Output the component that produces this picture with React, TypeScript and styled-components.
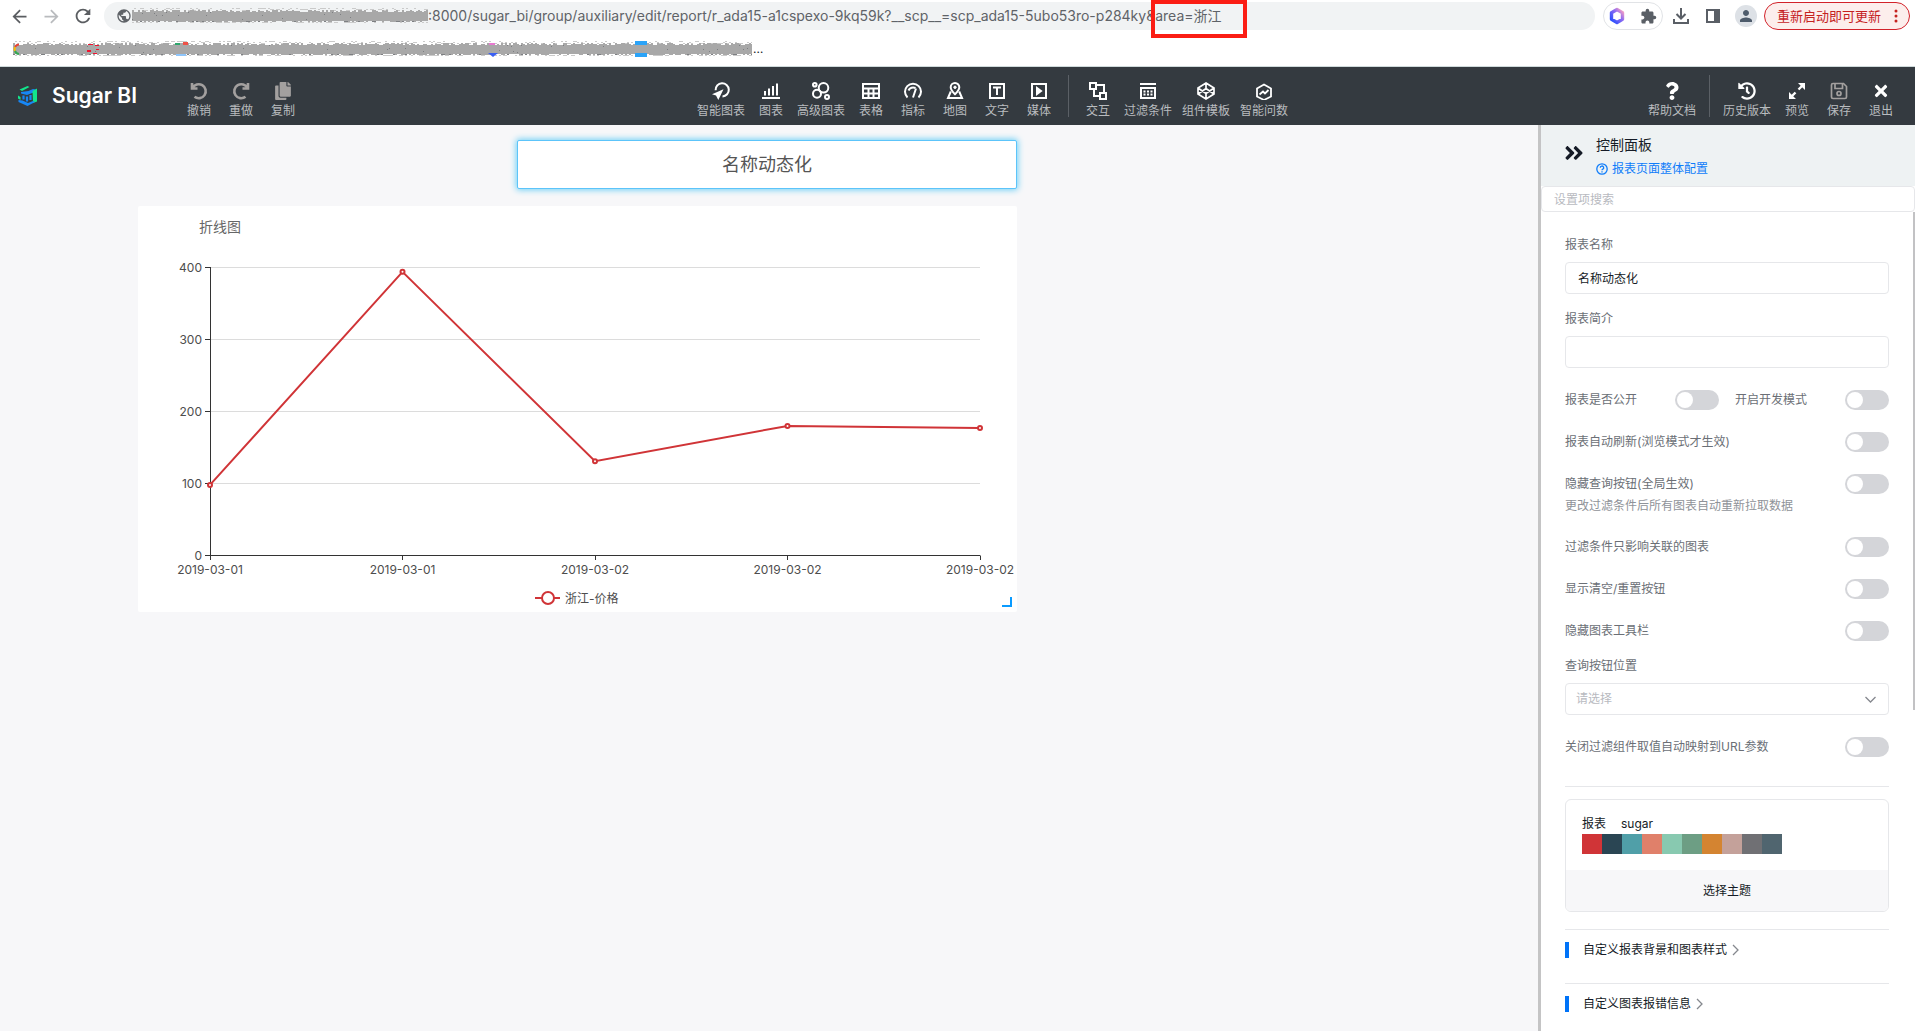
import React, { ReactNode } from "react";
import styled, { createGlobalStyle } from "styled-components";
import { FaCopy, FaQuestion, FaHistory, FaTimes, FaAngleDoubleRight } from "react-icons/fa";
import { MdArrowBack, MdArrowForward, MdRefresh, MdExtension, MdPublic, MdPerson } from "react-icons/md";

const Global = createGlobalStyle`
  * { box-sizing: border-box; }
  body {
    margin: 0;
    font-family: Inter, "Noto Sans CJK SC", sans-serif;
    font-size: 12px;
    line-height: 20px;
    color: #151b26;
    background: #f7f7f9;
  }
  button, input, select { font: inherit; color: inherit; }
  button { padding: 0; border: 0; background: none; cursor: pointer; }
  svg { display: block; flex: none; }
`;

const Shell = styled.div`
  display: flex;
  flex-direction: column;
  height: 100vh;
  overflow: hidden;
`;

/* ---------- browser chrome ---------- */

const Chrome = styled.div`
  background: #fff;
  border-bottom: 1px solid #cfdadb;
  height: 67px;
  flex: none;
`;

const AddressRow = styled.div`
  position: relative;
  display: flex;
  align-items: center;
  height: 32px;
  padding: 0 5px 0 8px;
`;

const NavButton = styled.button<{ $dim?: boolean }>`
  width: 22px;
  height: 22px;
  margin-right: 10px;
  display: grid;
  place-items: center;
  color: ${(p) => (p.$dim ? "#b9bbbe" : "#5a5d61")};
`;

const Omnibox = styled.label`
  flex: 1;
  display: flex;
  align-items: center;
  height: 28px;
  padding-left: 12px;
  border-radius: 14px;
  background: #f1f3f4;
  color: #5f6368;
`;

const UrlInput = styled.input`
  flex: 1;
  min-width: 0;
  padding: 0;
  border: 0;
  outline: 0;
  background: none;
  font-size: 14px;
  line-height: 20px;
`;

const UrlMark = styled.div`
  position: absolute;
  left: 1151px;
  top: 0;
  width: 96px;
  height: 38px;
  border: 4px solid #fb1d14;
  pointer-events: none;
`;

const ExtensionPill = styled.div`
  display: flex;
  align-items: center;
  justify-content: space-between;
  width: 60px;
  height: 28px;
  margin: 0 8px;
  padding: 0 5px;
  border: 1px solid #e1e3e6;
  border-radius: 14px;
  color: #5a5f66;
`;

const ChromeIcon = styled.button`
  width: 20px;
  height: 20px;
  margin-right: 12px;
  display: grid;
  place-items: center;
  color: #5a5f66;
`;

const Avatar = styled.button`
  width: 22px;
  height: 22px;
  margin-right: 7px;
  display: grid;
  place-items: center;
  border-radius: 50%;
  background: #dde1e6;
  color: #4d5b6b;
`;

const UpdateButton = styled.button`
  display: flex;
  align-items: center;
  justify-content: space-between;
  width: 146px;
  height: 28px;
  padding: 0 11px 0 12px;
  border: 1px solid #d2222a;
  border-radius: 14px;
  background: #fceeec;
  color: #c5221f;
  font-size: 13px;
`;

const BookmarkRow = styled.div`
  display: flex;
  align-items: center;
  gap: 1px;
  height: 34px;
  padding-left: 13px;
`;

function makeRandom(seed: number) {
  let s = seed;
  return () => {
    s = (s * 16807) % 2147483647;
    return s / 2147483647;
  };
}

function Scribble({ width, seed, children }: { width: number; seed: number; children?: ReactNode }) {
  const rnd = makeRandom(seed);
  let body = "";
  let light = "";
  let ink = "";
  for (let x = 0; x < width; x += 2) {
    const top = 2 + Math.floor(rnd() * 3);
    const end = 13 + Math.floor(rnd() * 2);
    body += `M${x} ${top}h2V${end}h-2z`;
    if (rnd() > 0.4) light += `M${x} ${Math.floor(rnd() * 3)}h2v1h-2z`;
    if (rnd() > 0.6) light += `M${x} 14h2v1h-2z`;
    if (rnd() > 0.9) ink += `M${x} ${4 + Math.floor(rnd() * 8)}h1v1h-1z`;
    if (rnd() > 0.88) ink += `M${x} 13h2v1h-2z`;
  }
  return (
    <svg width={width} height="16" viewBox={`0 0 ${width} 16`} aria-hidden="true">
      <path d={light} fill="#cacaca" />
      <path d={body} fill="#a8a8a8" />
      <path d={ink} fill="#7d7f82" />
      {children}
    </svg>
  );
}

/* ---------- application header ---------- */

const Header = styled.header`
  display: flex;
  flex: none;
  height: 58px;
  background: #343a40;
`;

const HeaderLeft = styled.div`
  display: flex;
  flex: 25 1 0;
`;

const HeaderRight = styled.div`
  display: flex;
  flex: 22 1 0;
  justify-content: flex-end;
  padding-right: 13px;
`;

const Brand = styled.div`
  display: flex;
  align-items: center;
  gap: 14px;
  width: 178px;
  height: 58px;
  padding-left: 18px;
  color: #fff;
  font-size: 21px;
  font-weight: 600;
  line-height: 28px;
  white-space: nowrap;
`;

const Tools = styled.div`
  display: flex;
`;

const ToolButton = styled.button<{ $muted?: boolean }>`
  display: flex;
  flex-direction: column;
  align-items: center;
  gap: 2px;
  min-width: 42px;
  height: 58px;
  padding: 15px 5px 0;
  color: ${(p) => (p.$muted ? "#a3a09f" : "#fff")};
`;

const ToolLabel = styled.span`
  color: #b9bcbf;
  line-height: 18px;
  white-space: nowrap;
`;

const ToolDivider = styled.span`
  width: 1px;
  height: 42px;
  margin: 8px;
  background: #5b6066;
`;

function Glyph({ children, w = 2 }: { children: ReactNode; w?: number }) {
  return (
    <svg width="18" height="18" viewBox="0 0 18 18" fill="none" stroke="currentColor" strokeWidth={w} aria-hidden="true">
      {children}
    </svg>
  );
}

const icons: Record<string, ReactNode> = {
  undo: (
    <Glyph w={2.6}>
      <path d="M2 1v5.5h5.5M2.5 6A7 7 0 1 1 4.5 14.8" />
    </Glyph>
  ),
  redo: (
    <Glyph w={2.6}>
      <path d="M16 1v5.5h-5.5M15.500 6A7 7 0 1 0 13.5 14.8" />
    </Glyph>
  ),
  smart: (
    <Glyph>
      <path d="M3.6 8.2A6.6 6.6 0 1 1 10.5 14.4" />
      <path d="M11.5 7.2 0 12.3l4 1.2 2.3 4.5z" fill="currentColor" stroke="none" />
    </Glyph>
  ),
  chart: (
    <Glyph>
      <path d="M0 16h18M3 13.5V9M7 13.5V6.5M11 13.5V4M15 13.5V1.5" />
    </Glyph>
  ),
  advanced: (
    <Glyph>
      <circle cx="11.5" cy="5.8" r="4.8" />
      <circle cx="5" cy="11.8" r="4" />
      <circle cx="2.8" cy="2.8" r="1.8" />
      <circle cx="15" cy="15" r="2" />
    </Glyph>
  ),
  table: (
    <Glyph>
      <path d="M1 2h16v14H1zM1 6.5h16M1 11.5h16M6.5 6v10M11.5 6v10" />
    </Glyph>
  ),
  gauge: (
    <Glyph>
      <path d="M3.5 15.5A8 8 0 1 1 14.5 15.5" />
      <path d="M4.5 8.5a5 5 0 0 1 7-2.5M9 15.5l3-9" />
    </Glyph>
  ),
  map: (
    <Glyph>
      <path d="M9 12.2C6 9.4 4.7 7.5 4.7 5.3a4.3 4.3 0 0 1 8.6 0C13.3 7.5 12 9.4 9 12.2z" />
      <circle cx="9" cy="5.3" r="1.2" fill="currentColor" strokeWidth="1" />
      <path d="M4.8 9.5 2 16h14l-2.8-6.5" />
    </Glyph>
  ),
  text: (
    <Glyph>
      <path d="M2 2h14v14H2zM5 5.5h8M9 5.5V13" />
    </Glyph>
  ),
  media: (
    <Glyph>
      <path d="M2 2h14v14H2z" />
      <path d="M7 6v6l4-3z" fill="currentColor" />
    </Glyph>
  ),
  interact: (
    <Glyph>
      <path d="M1 1h6v6H1zM11 11h6v6h-6zM7 3h8v8M5 7v7h6" />
    </Glyph>
  ),
  filter: (
    <Glyph>
      <path d="M1 2h16M2 6h14v10H2z" />
      <path d="M4.5 9.5h9M4.5 12.5h9" strokeDasharray="2 1.5" />
    </Glyph>
  ),
  template: (
    <Glyph w={1.7}>
      <path d="M9 1l8 5v6l-8 5-8-5V6zM1 6l8 5.5L17 6M1 12l8-5.5 8 5.5M9 1v5.5M9 11.5V17" />
    </Glyph>
  ),
  ask: (
    <Glyph w={1.8}>
      <path d="M9 2.500l7 4v8L9 18l-7-3.5v-8z" />
      <path d="M4.5 12.5l3.5-3 2 2L13.5 8" />
    </Glyph>
  ),
  expand: (
    <Glyph>
      <path d="M10.5 7.5 15 3M3 15l4.5-4.5" strokeWidth="2.4" />
      <path d="M10 1h7v7zM1 10v7h7z" fill="currentColor" stroke="none" />
    </Glyph>
  ),
  save: (
    <Glyph w={1.7}>
      <path d="M3 1.5h10.5l3 3V15q0 1.5-1.5 1.5H3Q1.5 16.5 1.5 15V3Q1.5 1.5 3 1.5z" />
      <path d="M5 1.5v5h7.5v-5" />
      <circle cx="9" cy="11.5" r="2" />
    </Glyph>
  ),
};

type Tool = [label: string, icon: ReactNode, muted?: boolean];

const editTools: Tool[] = [
  ["撤销", icons.undo, true],
  ["重做", icons.redo, true],
  ["复制", <FaCopy size={18} />, true],
];
const insertTools: Tool[] = [
  ["智能图表", icons.smart],
  ["图表", icons.chart],
  ["高级图表", icons.advanced],
  ["表格", icons.table],
  ["指标", icons.gauge],
  ["地图", icons.map],
  ["文字", icons.text],
  ["媒体", icons.media],
];
const extraTools: Tool[] = [
  ["交互", icons.interact],
  ["过滤条件", icons.filter],
  ["组件模板", icons.template],
  ["智能问数", icons.ask],
];
const helpTools: Tool[] = [["帮助文档", <FaQuestion size={18} />]];
const pageTools: Tool[] = [
  ["历史版本", <FaHistory size={18} />],
  ["预览", icons.expand],
  ["保存", icons.save, true],
  ["退出", <FaTimes size={18} />],
];

function ToolGroup({ items }: { items: Tool[] }) {
  return (
    <>
      {items.map(([label, icon, muted]) => (
        <ToolButton key={label} $muted={muted}>
          {icon}
          <ToolLabel>{label}</ToolLabel>
        </ToolButton>
      ))}
    </>
  );
}

/* ---------- canvas ---------- */

const Workspace = styled.div`
  display: flex;
  flex: 1;
  min-height: 0;
`;

const Canvas = styled.main`
  flex: 1;
  min-width: 0;
  padding: 15px 521px 0 138px;
  display: flex;
  flex-direction: column;
  gap: 17px;
`;

const TitleWidget = styled.h1`
  align-self: flex-end;
  width: 500px;
  height: 49px;
  margin: 0;
  border: 1px solid #5cc4fa;
  border-radius: 2px;
  box-shadow: 0 0 6px 1px #6fd0f6;
  background: #fff;
  color: #555;
  font-size: 18px;
  font-weight: 400;
  line-height: 47px;
  text-align: center;
`;

const ChartWidget = styled.section`
  border-radius: 2px;
  background: #fff;
`;

const points = [98, 394, 131, 180, 177];
const days = ["2019-03-01", "2019-03-01", "2019-03-02", "2019-03-02", "2019-03-02"];
const px = (i: number) => 72 + i * 192.5;
const py = (v: number) => 349.5 - v * 0.72;

function LineChart() {
  return (
    <svg width="100%" viewBox="0 0 879 406" fontSize="12" fill="#4d4d4d" role="img" aria-label="折线图">
      <text x="61" y="26" fontSize="14" fill="#666">
        折线图
      </text>
      {[0, 100, 200, 300, 400].map((v) => (
        <g key={v}>
          {v > 0 && <path d={`M72 ${py(v)}H842`} stroke="#dcdcdc" />}
          <path d={`M67 ${py(v)}h5`} stroke="#333" />
          <text x="64" y={py(v) + 4} textAnchor="end">
            {v}
          </text>
        </g>
      ))}
      <path d="M72.5 61V350M72 349.5H842.5" stroke="#333" fill="none" />
      {days.map((d, i) => (
        <g key={i}>
          <path d={`M${Math.floor(px(i)) + 0.5} 350v4`} stroke="#333" />
          <text x={px(i)} y="368" textAnchor="middle">
            {d}
          </text>
        </g>
      ))}
      <polyline points={points.map((v, i) => `${px(i)},${py(v)}`).join(" ")} stroke="#d03437" strokeWidth="2" fill="none" />
      {points.map((v, i) => (
        <circle key={i} cx={px(i)} cy={py(v)} r="2" stroke="#d03437" strokeWidth="2" fill="#fff" />
      ))}
      <path d="M397 392h25" stroke="#d03437" strokeWidth="2" />
      <circle cx="410" cy="392" r="6" stroke="#d03437" strokeWidth="2" fill="#fff" />
      <text x="427" y="397">
        浙江-价格
      </text>
      <path d="M864 400h9v-9" stroke="#0a9bff" strokeWidth="2" fill="none" />
    </svg>
  );
}

/* ---------- control panel ---------- */

const Panel = styled.aside`
  position: relative;
  display: flex;
  flex-direction: column;
  flex: none;
  width: 377px;
  border-left: 3px solid #c4c4c5;
  background: #fff;
`;

const PanelHead = styled.div`
  display: flex;
  align-items: center;
  gap: 11px;
  height: 61px;
  padding: 0 0 5px 22px;
  background: #eef2f3;
`;

const PanelHeading = styled.div`
  display: flex;
  flex-direction: column;
  gap: 2px;
  padding-top: 5px;
`;

const PanelTitle = styled.h2`
  margin: 0;
  font-size: 14px;
  font-weight: 400;
  line-height: 24px;
`;

const HelpLink = styled.a`
  display: flex;
  align-items: center;
  gap: 4px;
  color: #0f7dfa;
  text-decoration: none;
`;

const SearchInput = styled.input`
  height: 26px;
  flex: none;
  padding: 0 12px;
  border: 1px solid #e6e7ea;
  border-radius: 4px;
  outline: 0;
  &::placeholder {
    color: #b8babf;
  }
`;

const ScrollThumb = styled.span`
  position: absolute;
  right: 0;
  top: 87px;
  width: 2px;
  height: 55%;
  background: #c2c2c4;
`;

const PanelBody = styled.div`
  flex: 1;
  min-height: 0;
  overflow: hidden;
  padding: 23px 26px 0 24px;
`;

const FieldLabel = styled.label`
  display: block;
  margin-bottom: 7px;
  color: #6b6f76;
`;

const TextField = styled.input`
  display: block;
  width: 100%;
  height: 32px;
  margin-bottom: 15px;
  padding: 0 12px 2px;
  border: 1px solid #e6e7ea;
  border-radius: 4px;
  outline: 0;
`;

const Rows = styled.div`
  display: flex;
  flex-direction: column;
  gap: 22px;
  padding: 7px 0 15px;
`;

const Row = styled.div`
  display: flex;
  gap: 16px;
`;

const RowLabel = styled.label`
  flex: 1;
  display: flex;
  justify-content: space-between;
  color: #6b6f76;
  white-space: nowrap;
`;

const Hint = styled.p`
  margin: 2px 0 0;
  color: #8f9399;
  line-height: 19px;
`;

const Switch = styled.input`
  appearance: none;
  width: 44px;
  height: 20px;
  margin: 0;
  border-radius: 10px;
  background: #d4d5d9;
  cursor: pointer;
  &::before {
    content: "";
    display: block;
    width: 16px;
    height: 16px;
    margin: 2px;
    border-radius: 50%;
    background: #fff;
  }
  &:checked {
    background: #0073f8;
  }
  &:checked::before {
    margin-left: 26px;
  }
`;

const SelectBox = styled.div`
  display: grid;
  align-items: center;
  margin-bottom: 15px;
  > * {
    grid-area: 1 / 1;
  }
  > svg {
    justify-self: end;
    margin-right: 13px;
    pointer-events: none;
  }
`;

const Select = styled.select`
  appearance: none;
  width: 100%;
  height: 32px;
  padding: 0 10px;
  border: 1px solid #e6e7ea;
  border-radius: 4px;
  background: #fff;
  color: #b8babf;
`;

const Rule = styled.hr`
  margin: 0;
  border: 0;
  border-top: 1px solid #e6e7ea;
`;

const ThemeBlock = styled.div`
  margin-top: 14px;
`;

const ThemeCard = styled.div`
  margin: 12px 0 17px;
  border: 1px solid #e6e7ea;
  border-radius: 6px;
  overflow: hidden;
`;

const ThemeInfo = styled.div`
  padding: 14px 16px 16px;
`;

const ThemeName = styled.div`
  display: flex;
  gap: 15px;
`;

const Swatches = styled.div`
  display: flex;
`;

const Swatch = styled.span<{ $color: string }>`
  width: 20px;
  height: 20px;
  background: ${(p) => p.$color};
`;

const ThemeButton = styled.button`
  display: block;
  width: 100%;
  height: 41px;
  background: #f7f7f9;
`;

const Section = styled.button`
  display: flex;
  align-items: center;
  gap: 5px;
  width: 100%;
  height: 16px;
  margin: 12px 0 25px;
  line-height: 16px;
  &::before {
    content: "";
    width: 4px;
    height: 16px;
    margin-right: 9px;
    background: #0073f8;
  }
`;

const palette = ["#d03437", "#2a4553", "#509fa8", "#e0806a", "#88c9b0", "#6d9e84", "#d48431", "#c4a19a", "#707074", "#50656f"];

function Toggle({ label }: { label: string }) {
  return (
    <RowLabel>
      {label}
      <Switch type="checkbox" />
    </RowLabel>
  );
}

function Chevron({ down }: { down?: boolean }) {
  return (
    <svg
      width={down ? 11 : 7}
      height={down ? 7 : 12}
      viewBox={down ? "0 0 11 7" : "0 0 7 12"}
      fill="none"
      stroke="#85888e"
      strokeWidth="1.3"
      aria-hidden="true"
    >
      <path d={down ? "M.5 1l5 5 5-5" : "M1 1l5 5-5 5"} />
    </svg>
  );
}

function Logo() {
  return (
    <svg width="20" height="20" viewBox="0 0 20 20" aria-hidden="true">
      <path d="M1.500 3.500 9.500 0l2 1-7.500 4z" fill="#12e58c" />
      <path d="M3 6l7.500-1L15 3l3 .500-2.500 3L9 9 3 7.500z" fill="#1787f5" />
      <path d="M14.500 5 19 2.500v13L15 17z" fill="#12e58c" />
      <path d="M0 9.500 2.500 11v3L0 12.500z" fill="#12e58c" />
      <path d="M.5 14l4 .500L10 17l5-2 2 1-7.500 4L.5 16z" fill="#1787f5" />
      <path d="M5.500 9.500v4M9 10.500v5M12.500 9v5" stroke="#1787f5" strokeWidth="2.200" />
    </svg>
  );
}

export default function App() {
  return (
    <Shell>
      <Global />
      <Chrome>
        <AddressRow>
          <NavButton aria-label="后退"><MdArrowBack size={21} /></NavButton>
          <NavButton aria-label="前进" $dim><MdArrowForward size={21} /></NavButton>
          <NavButton aria-label="刷新"><MdRefresh size={22} /></NavButton>
          <Omnibox>
            <MdPublic size={16} />
            <Scribble width={296} seed={41} />
            <UrlInput
              aria-label="网址"
              defaultValue=":8000/sugar_bi/group/auxiliary/edit/report/r_ada15-a1cspexo-9kq59k?__scp__=scp_ada15-5ubo53ro-p284ky&area=浙江"
            />
          </Omnibox>
          <ExtensionPill>
            <svg width="16" height="18" viewBox="0 0 16 18" fill="none" aria-hidden="true">
              <defs>
                <linearGradient id="hex" x1="0" y1="1" x2="1" y2="0">
                  <stop offset="0" stopColor="#1e4bff" />
                  <stop offset="0.6" stopColor="#8e6bf2" />
                  <stop offset="1" stopColor="#ffa4c0" />
                </linearGradient>
              </defs>
              <path d="M8 2.5l5.500 3.200v6.600L8 15.500l-5.500-3.200V5.700z" stroke="url(#hex)" strokeWidth="3.4" strokeLinejoin="round" />
            </svg>
            <MdExtension size={17} />
          </ExtensionPill>
          <ChromeIcon aria-label="下载">
            <Glyph>
              <path d="M9 1v10M4.5 7 9 11.5 13.5 7M2 12v4h14v-4" />
            </Glyph>
          </ChromeIcon>
          <ChromeIcon aria-label="侧边栏">
            <svg width="14" height="14" viewBox="0 0 14 14" aria-hidden="true">
              <path d="M1 1h12v12H1z" fill="none" stroke="currentColor" strokeWidth="2" />
              <path d="M8 1h5v12H8z" fill="currentColor" />
            </svg>
          </ChromeIcon>
          <Avatar aria-label="用户"><MdPerson size={18} /></Avatar>
          <UpdateButton>
            重新启动即可更新
            <svg width="4" height="14" viewBox="0 0 4 14" fill="currentColor" aria-hidden="true">
              <circle cx="2" cy="2" r="1.5" />
              <circle cx="2" cy="7" r="1.5" />
              <circle cx="2" cy="12" r="1.5" />
            </svg>
          </UpdateButton>
          <UrlMark />
        </AddressRow>
        <BookmarkRow>
          <Scribble width={739} seed={977}>
            <path d="M6 3.500A5 5 0 0 0 2 6" stroke="#ea4335" strokeWidth="2" fill="none" />
            <path d="M2 6a5 5 0 0 0 0 4" stroke="#fbbc05" strokeWidth="2" fill="none" />
            <path d="M2 10a5 5 0 0 0 4 3" stroke="#34a853" strokeWidth="2" fill="none" />
            <path d="M75 3h5v1h-5zM82 4h4v1h-4zM74 9h4v2h-4zM80 12h4v1h-4zM83 8h3v1h-3z" fill="#f0142f" />
            <path d="M162 2h5v2h-5z" fill="#2ea56c" />
            <path d="M170 1h5v3h-5z" fill="#ef5148" />
            <path d="M163 13h10v2h-10z" fill="#8ec5fb" />
            <path d="M476 2h6v2h-6z" fill="#e77ad0" />
            <path d="M475 12h10l-5 4z" fill="#3a5ff2" />
            <path d="M622 0h12v4h-12zM622 12h12v4h-12z" fill="#2aa3f8" />
          </Scribble>
          …
        </BookmarkRow>
      </Chrome>

      <Header>
        <HeaderLeft>
          <Brand>
            <Logo />
            Sugar BI
          </Brand>
          <Tools>
            <ToolGroup items={editTools} />
          </Tools>
        </HeaderLeft>
        <Tools>
          <ToolGroup items={insertTools} />
          <ToolDivider />
          <ToolGroup items={extraTools} />
        </Tools>
        <HeaderRight>
          <ToolGroup items={helpTools} />
          <ToolDivider />
          <ToolGroup items={pageTools} />
        </HeaderRight>
      </Header>

      <Workspace>
        <Canvas>
          <TitleWidget>名称动态化</TitleWidget>
          <ChartWidget>
            <LineChart />
          </ChartWidget>
        </Canvas>

        <Panel>
          <PanelHead>
            <FaAngleDoubleRight size={22} />
            <PanelHeading>
              <PanelTitle>控制面板</PanelTitle>
              <HelpLink href="#help">
                <svg width="12" height="12" viewBox="0 0 12 12" fill="none" stroke="currentColor" strokeWidth="1.3" aria-hidden="true">
                  <circle cx="6" cy="6" r="5.2" />
                  <path d="M4.300 4.800a1.700 1.700 0 1 1 2.500 1.400Q6 6.600 6 7.300M6 8.300v1.200" />
                </svg>
                报表页面整体配置
              </HelpLink>
            </PanelHeading>
          </PanelHead>
          <SearchInput type="text" aria-label="设置项搜索" placeholder="设置项搜索" />
          <PanelBody>
            <FieldLabel htmlFor="name">报表名称</FieldLabel>
            <TextField id="name" defaultValue="名称动态化" />
            <FieldLabel htmlFor="desc">报表简介</FieldLabel>
            <TextField id="desc" />
            <Rows>
              <Row>
                <Toggle label="报表是否公开" />
                <Toggle label="开启开发模式" />
              </Row>
              <Toggle label="报表自动刷新(浏览模式才生效)" />
              <div>
                <Toggle label="隐藏查询按钮(全局生效)" />
                <Hint>更改过滤条件后所有图表自动重新拉取数据</Hint>
              </div>
              <Toggle label="过滤条件只影响关联的图表" />
              <Toggle label="显示清空/重置按钮" />
              <Toggle label="隐藏图表工具栏" />
            </Rows>
            <FieldLabel htmlFor="position">查询按钮位置</FieldLabel>
            <SelectBox>
              <Select id="position">
                <option>请选择</option>
              </Select>
              <Chevron down />
            </SelectBox>
            <Rows>
              <Toggle label="关闭过滤组件取值自动映射到URL参数" />
            </Rows>
            <ThemeBlock>
              <Rule />
              <ThemeCard>
                <ThemeInfo>
                  <ThemeName>
                    <span>报表</span>
                    <span>sugar</span>
                  </ThemeName>
                  <Swatches>
                    {palette.map((c) => (
                      <Swatch key={c} $color={c} />
                    ))}
                  </Swatches>
                </ThemeInfo>
                <ThemeButton>选择主题</ThemeButton>
              </ThemeCard>
            </ThemeBlock>
            <Rule />
            <Section>
              自定义报表背景和图表样式
              <Chevron />
            </Section>
            <Rule />
            <Section>
              自定义图表报错信息
              <Chevron />
            </Section>
          </PanelBody>
          <ScrollThumb />
        </Panel>
      </Workspace>
    </Shell>
  );
}
